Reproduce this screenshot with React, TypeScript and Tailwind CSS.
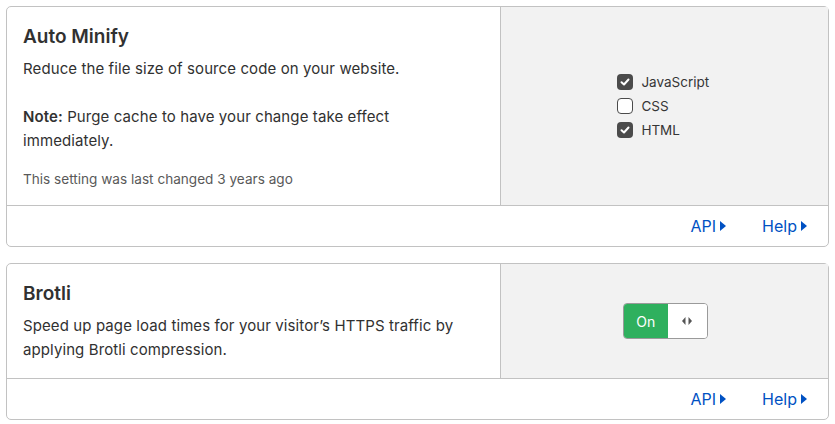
import React from "react";

const font = { fontFamily: "Inter, 'Liberation Sans', sans-serif" };

const Caret = () => (
    <svg width="6" height="10" viewBox="0 0 6 10" className="ml-1 inline-block">
        <path d="M0 0 L6 5 L0 10 Z" fill="currentColor" />
    </svg>
);

const Footer = () => (
    <div className="flex h-[41px] items-center justify-end gap-[36px] border-t border-[#c2c2c2] pr-[21px] text-[16px] text-[#0051c3]">
        <span className="flex items-center">API<Caret /></span>
        <span className="flex items-center">Help<Caret /></span>
    </div>
);

const Check = ({ checked, label }: { checked: boolean; label: string }) => (
    <div className="flex h-6 items-center gap-2">
        {checked ? (
            <span className="flex h-4 w-4 items-center justify-center rounded-[4px] bg-[#4b4b4b]">
                <svg width="10" height="10" viewBox="0 0 10 10">
                    <path d="M1.5 5.2 L4 7.5 L8.5 2.5" stroke="white" strokeWidth="2" fill="none" strokeLinecap="round" strokeLinejoin="round" />
                </svg>
            </span>
        ) : (
            <span className="h-4 w-4 rounded-[4px] border border-[#4b4b4b] bg-white" />
        )}
        <span className="text-[13.5px] text-[#363636]">{label}</span>
    </div>
);

const Card = ({ title, children, right }: { title: string; children: React.ReactNode; right: React.ReactNode }) => (
    <div className="rounded-[5px] border border-[#c2c2c2] bg-white">
        <div className="flex">
            <div className="w-[60%] py-4 pl-4 pr-8">
                <h2 className="text-[19px] font-semibold leading-7 text-[#313131]">{title}</h2>
                <div className="mt-1.5 text-[15px] leading-6 tracking-[0.1px] text-[#313131]">{children}</div>
            </div>
            <div className="flex w-[40%] items-center justify-center border-l border-[#c2c2c2] bg-[#f2f2f2]">
                {right}
            </div>
        </div>
        <Footer />
    </div>
);

export default function App() {
    return (
        <div className="min-h-screen bg-white px-[6px] pt-[6px]" style={font}>
            <Card
                title="Auto Minify"
                right={
                    <div className="ml-[-2px] flex flex-col">
                        <Check checked label="JavaScript" />
                        <Check checked={false} label="CSS" />
                        <Check checked label="HTML" />
                    </div>
                }
            >
                <p>Reduce the file size of source code on your website.</p>
                <p className="mt-6">
                    <span className="font-semibold">Note:</span>
                    {" Purge cache to have your change take effect immediately."}
                </p>
                <p className="mt-4 text-[13.6px] leading-5 tracking-normal text-[#595959]">This setting was last changed 3 years ago</p>
            </Card>
            <div className="h-4" />
            <Card
                title="Brotli"
                right={
                    <div className="ml-[2px] flex h-9 w-[85px] overflow-hidden rounded-[4px] border border-[#9a9a9a]">
                        <div className="flex w-[44px] items-center justify-center bg-[#2fb05e] text-[14px] text-white">On</div>
                        <div className="flex flex-1 items-center justify-center bg-white">
                            <svg width="10" height="8" viewBox="0 0 10 8">
                                <path d="M3.5 0 L0 4 L3.5 8 Z M6.5 0 L10 4 L6.5 8 Z" fill="#555" />
                            </svg>
                        </div>
                    </div>
                }
            >
                <p>Speed up page load times for your visitor’s HTTPS traffic by applying Brotli compression.</p>
            </Card>
        </div>
    );
}
